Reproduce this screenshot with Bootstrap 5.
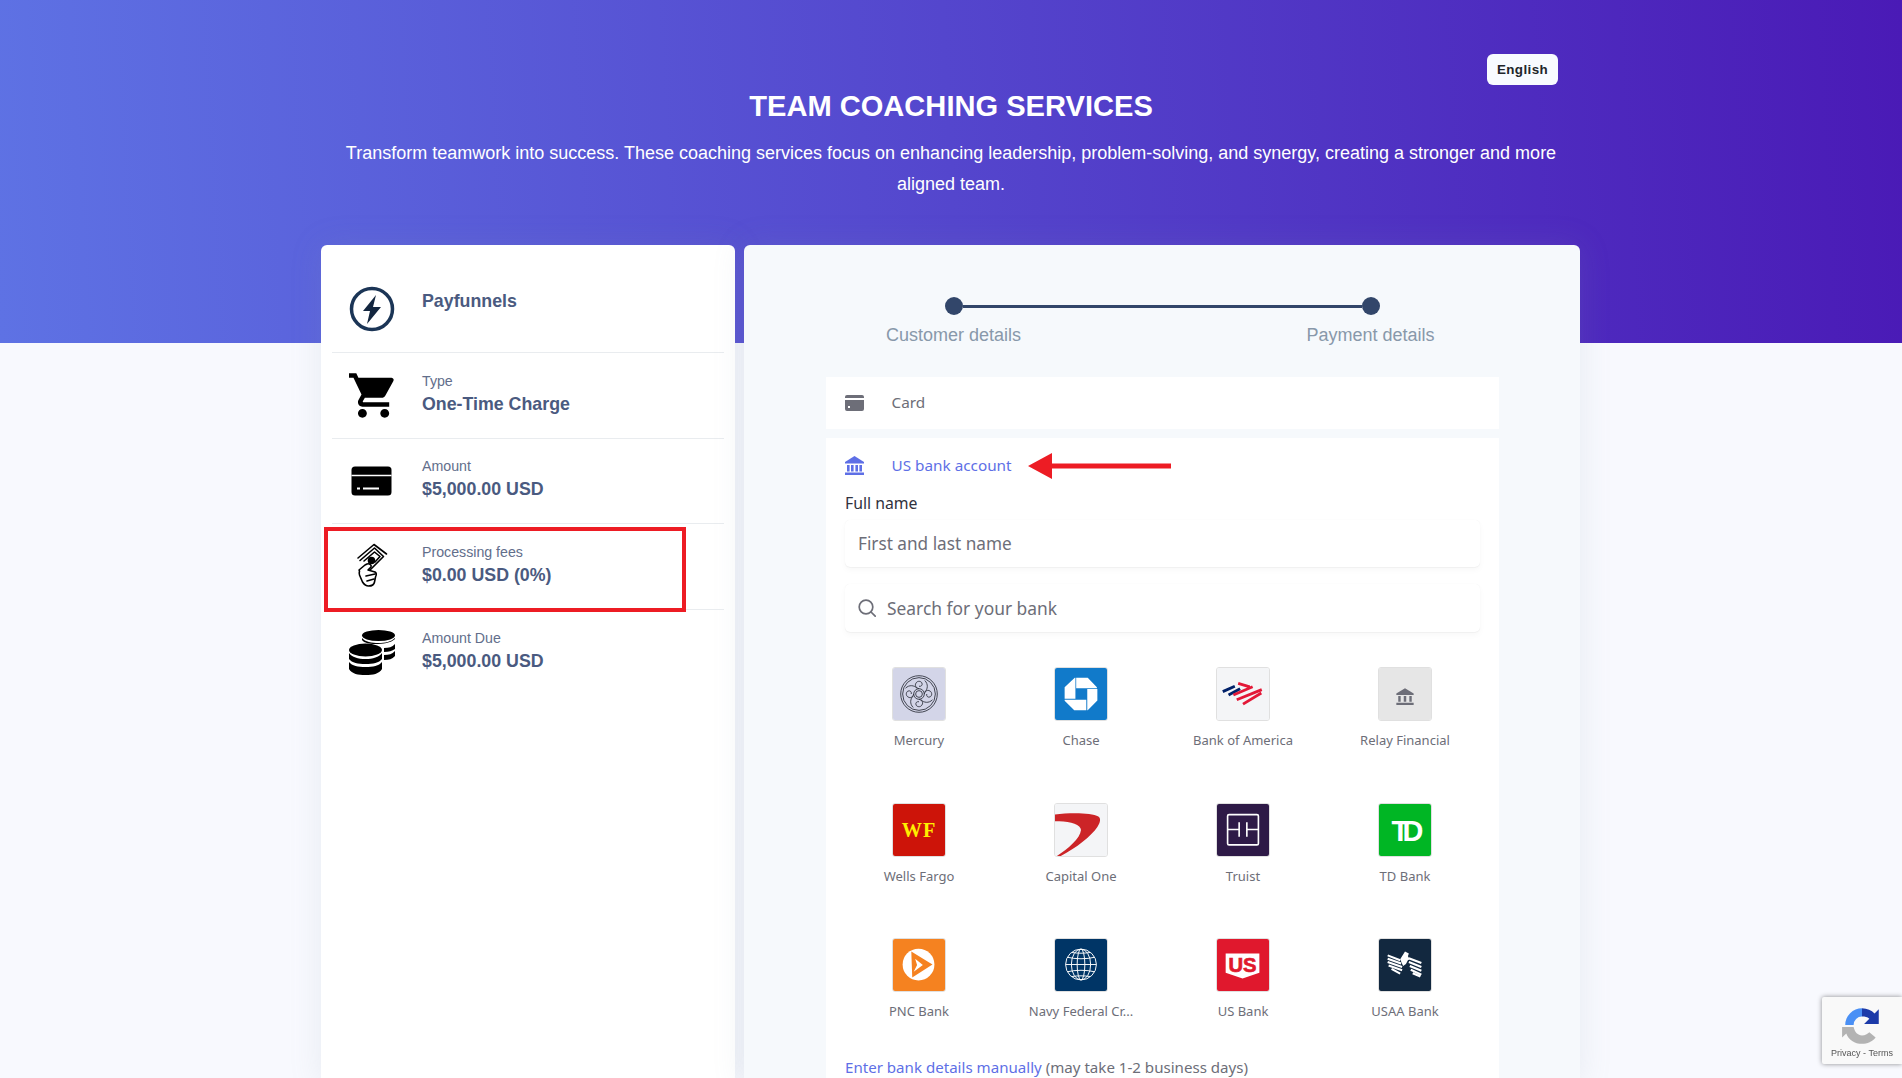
<!DOCTYPE html>
<html lang="en">
<head>
    <meta charset="UTF-8">
    <title>Team Coaching Services</title>
    <link href="https://cdn.jsdelivr.net/npm/bootstrap@5.3.3/dist/css/bootstrap.min.css" rel="stylesheet">
    <style>
        html, body { height: 100%; overflow: hidden; }
        body { background: #f8f9fe; font-family: "Liberation Sans", Arial, sans-serif; }
        .hero { height: 343px; background: linear-gradient(87deg, #5e72e4 0, #4a1ab6 100%); color: #fff; padding-top: 54px; }
        .page-wrap { width: 1260px; margin: 0 auto; }
        .lang-btn { width: 71px; height: 31px; padding: 0; margin-right: 23px; background: #f8fbff; border: 0; border-radius: 6px; color: #212529; font: 700 13.4px "Liberation Sans", Arial, sans-serif; letter-spacing: .4px; }
        .hero-title { font-size: 29.1px; font-weight: 700; line-height: 34px; margin: 4px 0 15px; }
        .hero-text { font-size: 18px; line-height: 31px; margin: 0 auto; width: 1240px; }
        .main-row { height: 840px; margin-top: -98px; gap: 9px; }
        .side-card { width: 414px; background: #fff; border-radius: 6px 6px 0 0; padding: 0 11px; box-shadow: 0 0 2rem rgba(136,152,170,.15); }
        .pay-card { width: 836px; background: #f6f9fc; border-radius: 6px 6px 0 0; box-shadow: 0 0 2rem rgba(136,152,170,.15); }
        .info-row { height: 85.6px; border-bottom: 1px solid #e9ecef; color: #4a5a80; }
        .info-row:first-child { height: 108px; }
        .info-row:last-child { border-bottom: 0; }
        .info-icon { width: 79px; margin-right: 11px; flex: none; }
        .info-text { margin-top: -3px; }
        .info-label { font-size: 14.2px; line-height: 20px; color: #626e8b; }
        .info-value { font-size: 17.8px; line-height: 26px; font-weight: 700; }
        .brand-icon { margin-top: 20px; }
        .brand-name { font-size: 17.8px; font-weight: 700; line-height: 26px; margin-top: 4px; }
        .red-box { position: absolute; left: -8px; top: 3px; width: 362px; height: 85px; border: 4.5px solid #ed1c24; }
        .stepper { width: 557px; margin: 52px auto 30px; }
        .step-track { margin: 0 61px; }
        .step-dot { width: 18px; height: 18px; border-radius: 50%; background: #32466a; flex: none; }
        .step-line { height: 3px; background: #32466a; }
        .step-label { width: 140px; margin-top: 8px; text-align: center; font-size: 18px; line-height: 24px; color: #8898aa; white-space: nowrap; }
        .method-list { margin: 0 81px 0 82px; font-family: "Noto Sans", sans-serif; }
        .method-panel { background: #fff; padding-bottom: 1px; }
        .method-head { height: 51px; padding-left: 19px; color: #6d6e78; font-size: 15.3px; }
        .method-head svg { margin-right: 27.5px; flex: none; }
        .method-active { margin-top: 9px; padding: 3px 19px 0; height: 640px; }
        .method-active .method-head { height: 48px; padding-left: 0; color: #5e6fe6; position: relative; }
        .red-arrow { position: absolute; left: 183px; top: 12px; }
        .field-label { font-size: 15.8px; line-height: 20px; color: #30313d; margin-top: 4px; margin-bottom: 7px; }
        .field-box { height: 47px; background: #fff; border-radius: 5px; box-shadow: 0 1px 1px rgba(0,0,0,.03), 0 3px 6px rgba(0,0,0,.03), 0 0 1px rgba(0,0,0,.06); }
        .field-box input { border: 0; outline: 0; width: 100%; height: 100%; background: transparent; font: 17.2px "Noto Sans", sans-serif; color: #30313d; padding: 0 13px; }
        .field-box input::placeholder { color: #6d6e78; opacity: 1; }
        .search-box { height: 48px; margin-top: 17px; padding-left: 13px; }
        .search-box input { font-size: 17.4px; padding-left: 11px; }
        .bank-grid { display: grid; grid-template-columns: repeat(4, 162px); grid-auto-rows: 112px; row-gap: 23.5px; margin: 35px -8px 0 -7px; }
        .bank-cell { text-align: center; font-size: 13px; line-height: 18px; color: #6d6e78; white-space: nowrap; }
        .bank-logo { display: block; width: 54px; height: 54px; margin: 0 auto 10px; border: 1px solid #e0e0e0; border-radius: 3px; }
        .manual-line { margin-top: 7px; font-size: 15.1px; line-height: 20px; color: #6d6e78; white-space: nowrap; }
        .manual-line a { color: #5e6fe6; text-decoration: none; }
        .recaptcha { position: fixed; right: 0; top: 997px; width: 80px; height: 67px; background: #f9f9f9; border-radius: 2px 0 0 2px; box-shadow: 0 0 5px rgba(0,0,0,.45); text-align: center; font: 9px/11px "Liberation Sans", Arial, sans-serif; color: #555; padding-top: 6px; }
        .recaptcha svg { display: block; margin: 0 auto 1px; }
    </style>
</head>
<body>

<div class="hero">
    <div class="page-wrap text-center">
        <div class="d-flex justify-content-end">
            <button class="lang-btn" type="button">English</button>
        </div>
        <h1 class="hero-title text-uppercase">Team Coaching Services</h1>
        <p class="hero-text">Transform teamwork into success. These coaching services focus on enhancing leadership, problem-solving, and synergy, creating a stronger and more aligned team.</p>
    </div>
</div>

<div class="page-wrap main-row d-flex">
    <!-- summary -->
    <div class="side-card">
        <div class="info-row d-flex align-items-center">
            <div class="info-icon brand-icon text-center">
                <svg width="46" height="46" viewBox="0 0 46 46"><circle cx="23" cy="23" r="20.5" fill="none" stroke="#1b3556" stroke-width="3.5"/><path d="M27 9 14 25h7l-3 13 14-17h-8z" fill="#13263f"/></svg>
            </div>
            <div class="brand-name">Payfunnels</div>
        </div>
        <div class="info-row d-flex align-items-center">
            <div class="info-icon text-center">
                <svg width="46" height="45" viewBox="1 2 20.6 20"><path d="M7 18c-1.1 0-1.99.9-1.99 2S5.9 22 7 22s2-.9 2-2-.9-2-2-2zM1 2v2h2l3.6 7.59-1.35 2.45c-.16.28-.25.61-.25.96 0 1.1.9 2 2 2h12v-2H7.42c-.14 0-.25-.11-.25-.25l.03-.12.9-1.63h7.45c.75 0 1.41-.41 1.75-1.03l3.58-6.49c.08-.14.12-.31.12-.48 0-.55-.45-1-1-1H5.21l-.94-2H1zm16 16c-1.1 0-1.99.9-1.99 2s.89 2 1.99 2 2-.9 2-2-.9-2-2-2z"/></svg>
            </div>
            <div class="info-text">
                <div class="info-label">Type</div>
                <div class="info-value">One-Time Charge</div>
            </div>
        </div>
        <div class="info-row d-flex align-items-center">
            <div class="info-icon text-center">
                <svg width="41" height="30" viewBox="0 0 41 30"><rect x=".5" y=".5" width="40" height="29" rx="3.5"/><path d="M.5 9.5h40" stroke="#fff" stroke-width="1.3"/><path d="M6 22.5h3M12 22.5h16" stroke="#fff" stroke-width="2"/></svg>
            </div>
            <div class="info-text">
                <div class="info-label">Amount</div>
                <div class="info-value">$5,000.00 USD</div>
            </div>
        </div>
        <div class="info-row d-flex align-items-center position-relative">
            <div class="red-box"></div>
            <div class="info-icon text-center">
                <svg width="32" height="46" viewBox="0 0 32 46" fill="none" stroke="#000" stroke-width="1.6" stroke-linejoin="round" stroke-linecap="round"><path d="M2 15 18 1.500 30.500 11"/><path d="M4 17.500 18.500 5 27.500 13.500 12 29"/><path d="M8 18 18.500 9 24 13.500 19 19"/><circle cx="15.500" cy="17.500" r="3" fill="#000"/><path d="M3 27 9 22l2-1c2-1 5 1 4 3l-3 3 7 2c1.500 1 1.500 3 .5 5l-1 5c-.5 3-3.500 4-6 4-3 0-4-1-6-4l-3-7c-.5-1-.5-2 0-4z" fill="#fff"/><path d="M10 33l9-2M11 38l7-2"/></svg>
            </div>
            <div class="info-text">
                <div class="info-label">Processing fees</div>
                <div class="info-value">$0.00 USD (0%)</div>
            </div>
        </div>
        <div class="info-row d-flex align-items-center">
            <div class="info-icon text-center">
                <svg width="46" height="46" viewBox="0 0 46 46"><ellipse cx="29.500" cy="5.500" rx="16.500" ry="5.500"/><path d="M13 8v2c2 3 8 4 13 4 8 0 16-1 20-5V8c-4 4-10 5-16.500 5S16 12 13 8zM35 18c5 0 8-1 11-4v5c-3 2-6 3-11 3zM35 25c5 0 8-1 11-4v5c-3 3-6 4-11 4z"/><ellipse cx="16.500" cy="20" rx="16.500" ry="6.500"/><path d="M0 23c3 4 9 6 16.500 6S30 27 33 23v6c-3 4-9 5-16.500 5S3 33 0 29zM0 32c3 4 9 5 16.500 5S30 36 33 32v7c-3 5-9 6-16.500 6S3 44 0 39z"/></svg>
            </div>
            <div class="info-text">
                <div class="info-label">Amount Due</div>
                <div class="info-value">$5,000.00 USD</div>
            </div>
        </div>
    </div>

    <!-- payment -->
    <div class="pay-card">
        <div class="stepper">
            <div class="step-track d-flex align-items-center">
                <div class="step-dot"></div>
                <div class="step-line flex-grow-1"></div>
                <div class="step-dot"></div>
            </div>
            <div class="d-flex justify-content-between">
                <div class="step-label">Customer details</div>
                <div class="step-label">Payment details</div>
            </div>
        </div>

        <div class="method-list">
            <div class="method-panel">
                <div class="method-head d-flex align-items-center">
                    <svg width="19" height="16" viewBox="0 0 19 16"><path d="M2 0h15a2 2 0 0 1 2 2v1H0V2a2 2 0 0 1 2-2zM0 5h19v9a2 2 0 0 1-2 2H2a2 2 0 0 1-2-2zm3 6v2h2v-2z" fill="#6d6e78" fill-rule="evenodd"/></svg>
                    Card
                </div>
            </div>
            <div class="method-panel method-active">
                <div class="method-head d-flex align-items-center">
                    <svg width="19" height="19" viewBox="0 0 19 19" fill="#5e6fe6"><path d="M9.500 0 19 6v1.500H0V6z"/><path d="M2 9h2.600v6.500H2zM6 9h2.600v6.500H6zM10.400 9H13v6.500h-2.600zM14.400 9H17v6.500h-2.600zM0 16.500h19V19H0z"/></svg>
                    US bank account
                    <svg class="red-arrow" width="144" height="26" viewBox="0 0 144 26"><path d="M0 13 24 0v10.500h119v5H24V26z" fill="#ed1c24"/></svg>
                </div>
                <div class="field-label">Full name</div>
                <div class="field-box"><input type="text" placeholder="First and last name"></div>
                <div class="field-box search-box d-flex align-items-center">
                    <svg class="flex-shrink-0" width="18" height="18" viewBox="0 0 18 18" fill="none" stroke="#6d6e78" stroke-width="1.700"><circle cx="8" cy="8" r="6.800"/><path d="m13 13 4.200 4.200" stroke-linecap="round"/></svg>
                    <input type="text" placeholder="Search for your bank">
                </div>

                <div class="bank-grid">
                    <div class="bank-cell">
                        <svg class="bank-logo" viewBox="0 0 54 54"><rect width="54" height="54" fill="#d3d5e8"/><g fill="none" stroke="#2c2f3a" stroke-width=".9"><circle cx="27" cy="27" r="19"/><circle cx="27" cy="27" r="17"/><circle cx="27" cy="27" r="5.500"/><circle cx="27" cy="27" r="3.500"/><g id="merc-arm"><path d="M27 21.500c-3-1-5-3-3-6 1.500-2.500 5-2 6 0s-.5 4-3 3.500"/><path d="M33 25c3-3 4-8 0-12"/></g><use href="#merc-arm" transform="rotate(90 27 27)"/><use href="#merc-arm" transform="rotate(180 27 27)"/><use href="#merc-arm" transform="rotate(270 27 27)"/></g></svg>
                        Mercury
                    </div>
                    <div class="bank-cell">
                        <svg class="bank-logo" viewBox="0 0 54 54"><rect width="54" height="54" fill="#117aca"/><path d="M22 10h12l9.500 10v1H22zM33.500 21.800H44v12L34 44h-.5zM32.500 33V44H20L10 34v-1zM21.200 32H10V20L20.500 10h.7z" fill="#fff"/></svg>
                        Chase
                    </div>
                    <div class="bank-cell">
                        <svg class="bank-logo" viewBox="0 0 54 54"><rect width="54" height="54" fill="#f4f5f7"/><g fill="none" stroke-width="3"><path d="M6 24.500 18.500 19M12 28 24 21.500" stroke="#012169"/><path d="M22 16 34 19.500M17 28 37 19.500M20.500 33 46.500 22.500M27 37.500 46 26" stroke="#e31837"/></g></svg>
                        Bank of America
                    </div>
                    <div class="bank-cell">
                        <svg class="bank-logo" viewBox="0 0 54 54"><rect width="54" height="54" fill="#e6e6e6"/><g fill="#6d6e78"><path d="M27 21l9 5.500V28H18v-1.500z"/><path d="M20 29h2.500v6H20zM25.700 29h2.600v6h-2.600zM31.500 29H34v6h-2.500zM18 36h18v2.500H18z"/></g></svg>
                        Relay Financial
                    </div>
                    <div class="bank-cell">
                        <svg class="bank-logo" viewBox="0 0 54 54"><rect width="54" height="54" fill="#cd1409"/><text x="27" y="34" text-anchor="middle" font-family="Liberation Serif, serif" font-weight="700" font-size="21" letter-spacing="1" fill="#ffef00">WF</text></svg>
                        Wells Fargo
                    </div>
                    <div class="bank-cell">
                        <svg class="bank-logo" viewBox="0 0 54 54"><rect width="54" height="54" fill="#f4f5f7"/><path d="M0 11C15 9 38 9 45 13c3 2 2 6-1 11C38 33 22 46 6 54H2C14 46 26 36 27 27c0-6-13-10-27-9z" fill="#cc2427"/></svg>
                        Capital One
                    </div>
                    <div class="bank-cell">
                        <svg class="bank-logo" viewBox="0 0 54 54"><rect width="54" height="54" fill="#2e1a47"/><rect x="11" y="11" width="32" height="31.500" rx="1.500" fill="none" stroke="#fff" stroke-width="1.700"/><path d="M11 26.500h12M23 19v15M31 19v15M31 26.500h12" fill="none" stroke="#fff" stroke-width="1.700"/></svg>
                        Truist
                    </div>
                    <div class="bank-cell">
                        <svg class="bank-logo" viewBox="0 0 54 54"><rect width="54" height="54" fill="#00b624"/><text x="26" y="38" text-anchor="middle" font-family="Liberation Sans, sans-serif" font-weight="700" font-size="30" letter-spacing="-7" fill="#fff">TD</text></svg>
                        TD Bank
                    </div>
                    <div class="bank-cell">
                        <svg class="bank-logo" viewBox="0 0 54 54"><rect width="54" height="54" fill="#f58220"/><circle cx="26.500" cy="26.500" r="16.500" fill="#fff"/><path d="M19 13 41 26.500 20 40z" fill="#f58220"/><path d="M23 20.500 31 27 21.500 34 25 27z" fill="#fff"/></svg>
                        PNC Bank
                    </div>
                    <div class="bank-cell">
                        <svg class="bank-logo" viewBox="0 0 54 54"><rect width="54" height="54" fill="#003566"/><g fill="none" stroke="#fff" stroke-width="1"><circle cx="27" cy="26.500" r="16"/><ellipse cx="27" cy="26.500" rx="10" ry="16"/><ellipse cx="27" cy="26.500" rx="4" ry="16"/><path d="M11 26.500h32M13 19c8 2 20 2 28 0M13 34c8-2 20-2 28 0M17.500 14c6 1 13 1 19 0M17.500 39c6-1 13-1 19 0"/></g></svg>
                        Navy Federal Cr...
                    </div>
                    <div class="bank-cell">
                        <svg class="bank-logo" viewBox="0 0 54 54"><rect width="54" height="54" fill="#e0182d"/><path d="M9 15h35v20l-17.500 6L9 35z" fill="#fff"/><text x="26.500" y="34" text-anchor="middle" font-family="Liberation Sans, sans-serif" font-weight="700" font-size="21" stroke="#e0182d" stroke-width=".7" fill="#e0182d">US</text></svg>
                        US Bank
                    </div>
                    <div class="bank-cell">
                        <svg class="bank-logo" viewBox="0 0 54 54"><rect width="54" height="54" fill="#12283f"/><g fill="none" stroke="#fff" stroke-width="2.200"><path d="M9 17l13 5M9 20.500l14 5M9 24l15 5M10 27.500l14 5M13 31l9 5M31 20l13 5M31 24l13 5M32 28l12 5M33 32l11 5M35 35.500l8 3.500"/></g><path d="M22 21l5-8 4 2-1 3 2 3-2 1-2 4-3 2z" fill="#fff"/></svg>
                        USAA Bank
                    </div>
                </div>

                <div class="manual-line"><a href="#">Enter bank details manually</a> (may take 1-2 business days)</div>
            </div>
        </div>
    </div>
</div>

<div class="recaptcha">
    <svg width="44" height="44" viewBox="0 0 42 42" fill="none"><path d="M21 5a16 16 0 0 0-16 16h8a8 8 0 0 1 8-8z" fill="#4a90f5"/><path d="M21 5c5 0 9 2 12 5l4-4v14H23l5-5c-2-1.500-4-2-7-2z" fill="#1c3aa9"/><path d="M5 23h8c1 5 4 8 8 8 3 0 5-1 7-3l6 5c-3 4-8 6-13 6-7 0-13-4-15-10l-4 4V23z" fill="#b3b3b3"/></svg>
    Privacy - Terms
</div>

<script src="https://cdn.jsdelivr.net/npm/bootstrap@5.3.3/dist/js/bootstrap.bundle.min.js"></script>
</body>
</html>
